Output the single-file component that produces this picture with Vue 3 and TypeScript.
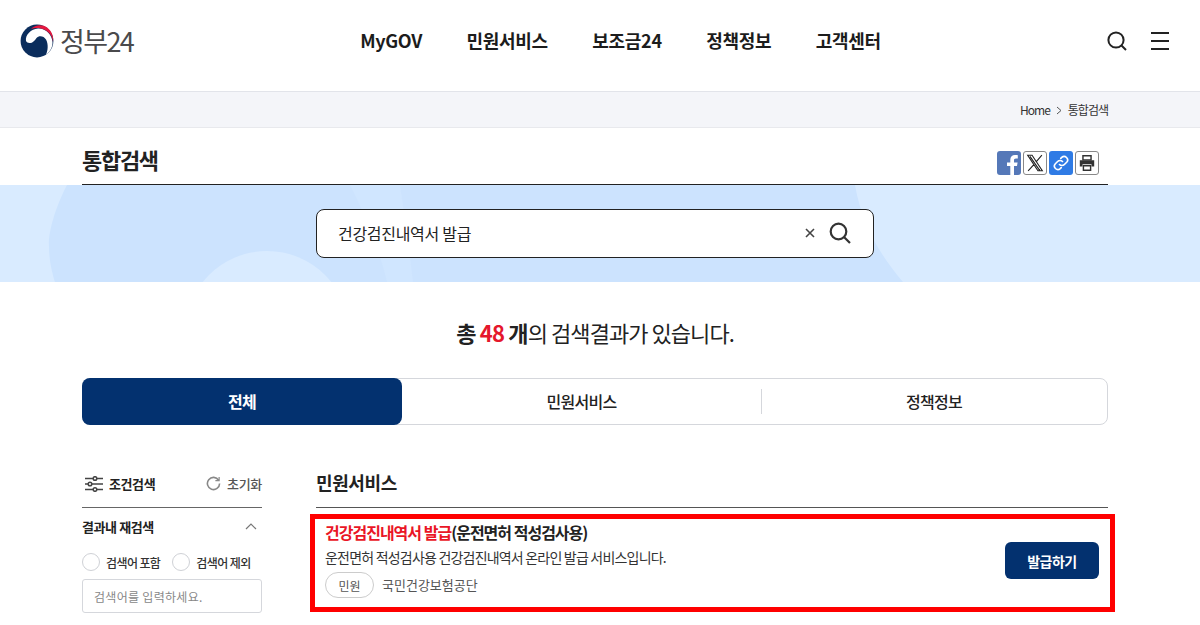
<script setup lang="ts">
const navItems: string[] = ['MyGOV', '민원서비스', '보조금24', '정책정보', '고객센터']
const tabs: string[] = ['전체', '민원서비스', '정책정보']
</script>

<template>
  <div class="page">
    <header class="top">
      <div class="logo">
        <svg class="emblem" viewBox="0 0 34 34" width="34" height="34">
          <circle cx="17" cy="17" r="16.400" fill="#0b2d5c" />
          <path d="M6 17C5 11 11 5 18 4.500 26 4 32 11 32.500 18c.3 5-2.500 10-6.500 12.500 2-4 2.500-10.500 0-15-2-3.500-7-4.500-9.500-1.500-2 3-4.500 5.500-7 5-1.500 0-3-1-3.500-2z" fill="#fff" />
          <path d="M11 5c4-4 11-5 16-1.500 5 3.500 6.800 9.500 6 14.500-.5-6-4-10-8-12-5-2.500-10-2.500-14-1z" fill="#e5173f" />
        </svg>
        <span class="logo-text">정부24</span>
      </div>
      <nav class="nav">
        <a v-for="item in navItems" :key="item" class="nav-item">{{ item }}</a>
      </nav>
      <div class="top-icons">
        <svg width="22" height="22" viewBox="0 0 22 22" fill="none" stroke="#222" stroke-width="2">
          <circle cx="10" cy="10" r="7.600" />
          <path d="M15.500 15.500 20 20" />
        </svg>
        <svg class="burger" width="20" height="18" viewBox="0 0 20 18" fill="none" stroke="#222" stroke-width="2">
          <path d="M1 1h18M1 9h18M1 17h18" />
        </svg>
      </div>
    </header>

    <div class="crumb">
      <div class="crumb-in">
        <span class="home">Home</span>
        <svg class="chev" width="6" height="9" viewBox="0 0 6 9" fill="none" stroke="#555"><path d="m1 1 4 3.500L1 8" /></svg>
        <span>통합검색</span>
      </div>
    </div>

    <div class="title-row">
      <h1>통합검색</h1>
      <div class="share">
        <span class="sbtn fb">
          <svg viewBox="0 0 24 24" width="24" height="24"><path d="M17 24v-9h3l.6-3.600H17V9.200c0-1.100.5-1.800 2-1.800h1.800V4.200C20.300 4.100 19.200 4 18 4c-2.800 0-4.700 1.700-4.700 4.800v2.600H10V15h3.300v9z" fill="#fff" /></svg>
        </span>
        <span class="sbtn line">
          <svg viewBox="0 0 24 24" width="22" height="22"><path d="M4 3.500h4.800L20 20.500h-4.800zM6.500 4.800l10 14.400h1M19.500 3.500 13 11M11 13.500l-6.500 7" fill="none" stroke="#222" stroke-width="1.200" /></svg>
        </span>
        <span class="sbtn link">
          <svg viewBox="0 0 24 24" width="18" height="18" fill="none" stroke="#fff" stroke-width="2.200" stroke-linecap="round"><path d="M10 14a4.500 4.500 0 0 0 6.500 0l3-3A4.600 4.600 0 0 0 13 4.500l-1.300 1.300" /><path d="M14 10a4.500 4.500 0 0 0-6.500 0l-3 3a4.600 4.600 0 0 0 6.500 6.500l1.300-1.300" /></svg>
        </span>
        <span class="sbtn line">
          <svg viewBox="0 0 20 20" width="18" height="18"><path d="M5.500 2h9v4.500h-9z" fill="none" stroke="#333" stroke-width="1.600" /><path d="M2 7h16v7h-3v-2.500H5V14H2z" fill="#333" /><path d="M6 13h8v5H6z" fill="none" stroke="#333" stroke-width="1.600" /></svg>
        </span>
      </div>
    </div>

    <section class="band">
      <svg class="band-bg" viewBox="0 0 1200 97" width="1200" height="97">
        <path d="M67 0C54 25 48 50 49 61c0 14 3 27 6 36h848C880 70 862 40 855 0z" fill="#cce3fe" />
        <path d="M350 0h50c6 40 10 70 13 97h-26C378 60 365 30 350 0z" fill="#d0e6ff" />
        <circle cx="267" cy="148" r="82" fill="#d9ebff" />
      </svg>
      <div class="search">
        <span class="q">건강검진내역서 발급</span>
        <svg class="x" width="10" height="10" viewBox="0 0 10 10" fill="none" stroke="#444" stroke-width="1.600"><path d="m1 1 8 8M9 1 1 9" /></svg>
        <svg width="22" height="22" viewBox="0 0 22 22" fill="none" stroke="#333" stroke-width="2.200">
          <circle cx="9.500" cy="9.500" r="7.800" />
          <path d="m15 15 6 6" />
        </svg>
      </div>
    </section>

    <p class="count"><b>총 <em>48</em> 개</b>의 검색결과가 있습니다.</p>

    <div class="tabs">
      <div v-for="(t, i) in tabs" :key="t" class="tab" :class="{ on: i === 0, mid: i === 1, sep: i === 2 }">{{ t }}</div>
    </div>

    <div class="body">
      <aside class="side">
        <div class="side-head">
          <div class="sh-left">
            <svg width="18" height="16" viewBox="0 0 18 16" fill="none" stroke="#444" stroke-width="1.500">
              <path d="M0 2.500h8M12 2.500h6M0 8h3M7 8h11M0 13.500h8M12 13.500h6" />
              <circle cx="10" cy="2.500" r="1.800" /><circle cx="5" cy="8" r="1.800" /><circle cx="10" cy="13.500" r="1.800" />
            </svg>
            <b>조건검색</b>
          </div>
          <div class="sh-right">
            <svg width="15" height="15" viewBox="0 0 16 16" fill="none" stroke="#888" stroke-width="1.700"><path d="M13.500 4.500A6.500 6.500 0 1 0 14.500 8" /><path d="M14 1v4h-4" stroke-width="1.300" /></svg>
            <span>초기화</span>
          </div>
        </div>
        <div class="side-sub">
          <b>결과내 재검색</b>
          <svg width="12" height="7" viewBox="0 0 12 7" fill="none" stroke="#777" stroke-width="1.200"><path d="m1 6 5-5 5 5" /></svg>
        </div>
        <div class="radios">
          <label class="radio"><i></i>검색어 포함</label>
          <label class="radio"><i></i>검색어 제외</label>
        </div>
        <div class="input">검색어를 입력하세요.</div>
      </aside>

      <main class="results">
        <h2>민원서비스</h2>
        <div class="card">
          <div class="card-text">
            <div class="card-title"><em>건강검진내역서 발급</em>(운전면허 적성검사용)</div>
            <div class="card-desc">운전면허 적성검사용 건강검진내역서 온라인 발급 서비스입니다.</div>
            <div class="card-meta">
              <span class="chip">민원</span>
              <span class="org">국민건강보험공단</span>
            </div>
          </div>
          <button class="issue">발급하기</button>
        </div>
      </main>
    </div>
  </div>
</template>

<style>
html, body { margin: 0; padding: 0; background: #fff; overflow: hidden; }
</style>

<style scoped>
.page {
  width: 1200px;
  height: 625px;
  overflow: hidden;
  font-family: "Noto Sans CJK KR", "Noto Sans", sans-serif;
  color: #222;
}
.top {
  height: 81px;
  display: flex;
  align-items: center;
  border-bottom: 1px solid #e2e4ea;
  padding: 0 30px 10px 20px;
  justify-content: space-between;
  box-sizing: content-box;
}
.logo { display: flex; align-items: center; gap: 6px; width: 200px; }
.emblem { display: block; }
.logo-text { font-size: 27px; font-weight: 400; letter-spacing: -1.600px; color: #4a4a4c; line-height: 34px; }
.nav { display: flex; gap: 44.500px; margin: 0 0 2px -85px; }
.nav-item { font-size: 18px; font-weight: 700; color: #1c1c1c; letter-spacing: -0.3px; }
.top-icons { display: flex; align-items: center; gap: 22px; }
.burger { margin-top: 1px; }
.crumb {
  height: 35px;
  background: #f4f5f9;
  border-bottom: 1px solid #e8e9ed;
}
.crumb-in {
  width: 1026px;
  margin-left: 82px;
  height: 35px;
  display: flex;
  align-items: center;
  justify-content: flex-end;
  gap: 6px;
  font-size: 12px;
  letter-spacing: -1px;
  color: #333;
}
.chev { margin-top: 2px; }
.title-row {
  width: 1026px;
  height: 56px;
  margin-left: 82px;
  display: flex;
  align-items: center;
  justify-content: space-between;
  border-bottom: 1px solid #222;
}
.title-row h1 { margin: 5px 0 0; font-size: 22px; font-weight: 700; letter-spacing: -1.300px; color: #222; }
.share { display: flex; gap: 2px; margin: 14px 9px 0 0; }
.sbtn {
  width: 24px;
  height: 24px;
  border-radius: 3px;
  display: flex;
  align-items: center;
  justify-content: center;
  overflow: hidden;
}
.fb { background: #5578b8; }
.link { background: #2f7be5; }
.line { border: 1px solid #888; width: 22px; height: 22px; }
.band {
  height: 97px;
  background: #d9ebff;
  position: relative;
  display: flex;
  align-items: center;
  justify-content: center;
}
.band-bg { position: absolute; left: 0; top: 0; }
.search {
  position: relative;
  height: 47px;
  border: 1px solid #222;
  border-radius: 8px;
  background: #fff;
  display: flex;
  align-items: center;
  padding: 0 22px 0 21px;
  box-sizing: content-box;
  width: 513px;
  margin: -1px 0 0 -10px;
}
.q { flex: 1; font-size: 16px; letter-spacing: -0.3px; color: #222; }
.x { margin-right: 14px; }
.count {
  margin: 36px 0 0;
  width: 1190px;
  height: 28px;
  text-align: center;
  font-size: 22px;
  line-height: 28px;
  letter-spacing: -0.950px;
  color: #222;
}
.count b { font-weight: 700; letter-spacing: -0.800px; }
.count em { font-style: normal; color: #e5172c; }
.tabs {
  width: 1026px;
  height: 47px;
  margin: 32px 0 0 82px;
  border: 1px solid #d5d7dc;
  border-radius: 8px;
  box-sizing: border-box;
  display: flex;
}
.tab {
  flex: 1;
  display: flex;
  align-items: center;
  justify-content: center;
  font-size: 16px;
  font-weight: 500;
  letter-spacing: -0.7px;
  color: #222;
  position: relative;
  padding-bottom: 2px;
}
.tab.on {
  background: #03316f;
  color: #fff;
  font-weight: 700;
  border-radius: 8px;
  margin: -1px 0 -1px -1px;
  flex: 0 0 320px;
}
.tab.mid { flex: 0 0 359px; }
.tab.sep::before {
  content: "";
  position: absolute;
  left: 0;
  top: 10px;
  bottom: 10px;
  width: 1px;
  background: #d5d7dc;
}
.body {
  width: 1026px;
  margin-left: 82px;
  display: flex;
  gap: 54px;
}
.side { width: 180px; }
.side-head {
  box-sizing: border-box;
  padding-top: 49px;
  height: 83px;
  display: flex;
  justify-content: space-between;
  align-items: flex-start;
  border-bottom: 1px solid #666;
}
.sh-left { display: flex; align-items: center; gap: 6px; font-size: 13px; letter-spacing: -0.4px; margin-left: 3px; }
.sh-right { display: flex; align-items: center; gap: 6px; font-size: 13px; font-weight: 500; letter-spacing: -0.3px; color: #555; }
.side-sub {
  height: 36px;
  padding-bottom: 2px;
  display: flex;
  align-items: center;
  justify-content: space-between;
  font-size: 13px;
  letter-spacing: -0.4px;
  padding-right: 5px;
}
.radios { display: flex; gap: 12px; margin-top: 5px; height: 22px; }
.radio { display: flex; align-items: center; gap: 6px; font-size: 12px; font-weight: 500; letter-spacing: -0.6px; color: #333; }
.radio i {
  width: 18px;
  height: 18px;
  box-sizing: border-box;
  border: 1px solid #cfd1d6;
  border-radius: 50%;
  display: block;
}
.input {
  margin-top: 6px;
  height: 34px;
  box-sizing: border-box;
  border: 1px solid #d5d7dc;
  border-radius: 3px;
  padding: 0 11px;
  display: flex;
  align-items: center;
  font-size: 12px;
  letter-spacing: 0.3px;
  color: #888;
}
.results { width: 792px; }
.results h2 {
  margin: 0;
  height: 83px;
  box-sizing: border-box;
  padding-top: 44px;
  font-size: 18px;
  line-height: 27px;
  font-weight: 700;
  letter-spacing: -0.4px;
  color: #222;
  border-bottom: 1px solid #555;
}
.card {
  margin: 6px -7px 0 -6px;
  height: 98px;
  border: 5px solid #f00;
  box-sizing: border-box;
  display: flex;
  align-items: flex-start;
  justify-content: space-between;
  padding: 2px 11px 0 10px;
}
.card-title { font-size: 16px; font-weight: 700; letter-spacing: -1px; line-height: 22px; color: #222; }
.card-title em { font-style: normal; color: #ea1526; }
.card-desc { font-size: 14px; letter-spacing: -0.8px; line-height: 20px; margin-top: 4px; color: #333; }
.card-meta { display: flex; align-items: center; gap: 8px; margin-top: 5px; }
.chip {
  width: 49px;
  height: 26px;
  box-sizing: border-box;
  border: 1px solid #ccc;
  border-radius: 13px;
  display: flex;
  align-items: center;
  justify-content: center;
  font-size: 12px;
  color: #555;
}
.org { font-size: 13px; color: #555; letter-spacing: 0; margin-bottom: 2px; }
.issue {
  width: 94px;
  height: 37px;
  margin-top: 21px;
  background: #03316f;
  color: #fff;
  border: 0;
  border-radius: 6px;
  font: 700 14px "Noto Sans CJK KR", sans-serif;
  letter-spacing: -0.5px;
  padding: 0;
}
</style>
